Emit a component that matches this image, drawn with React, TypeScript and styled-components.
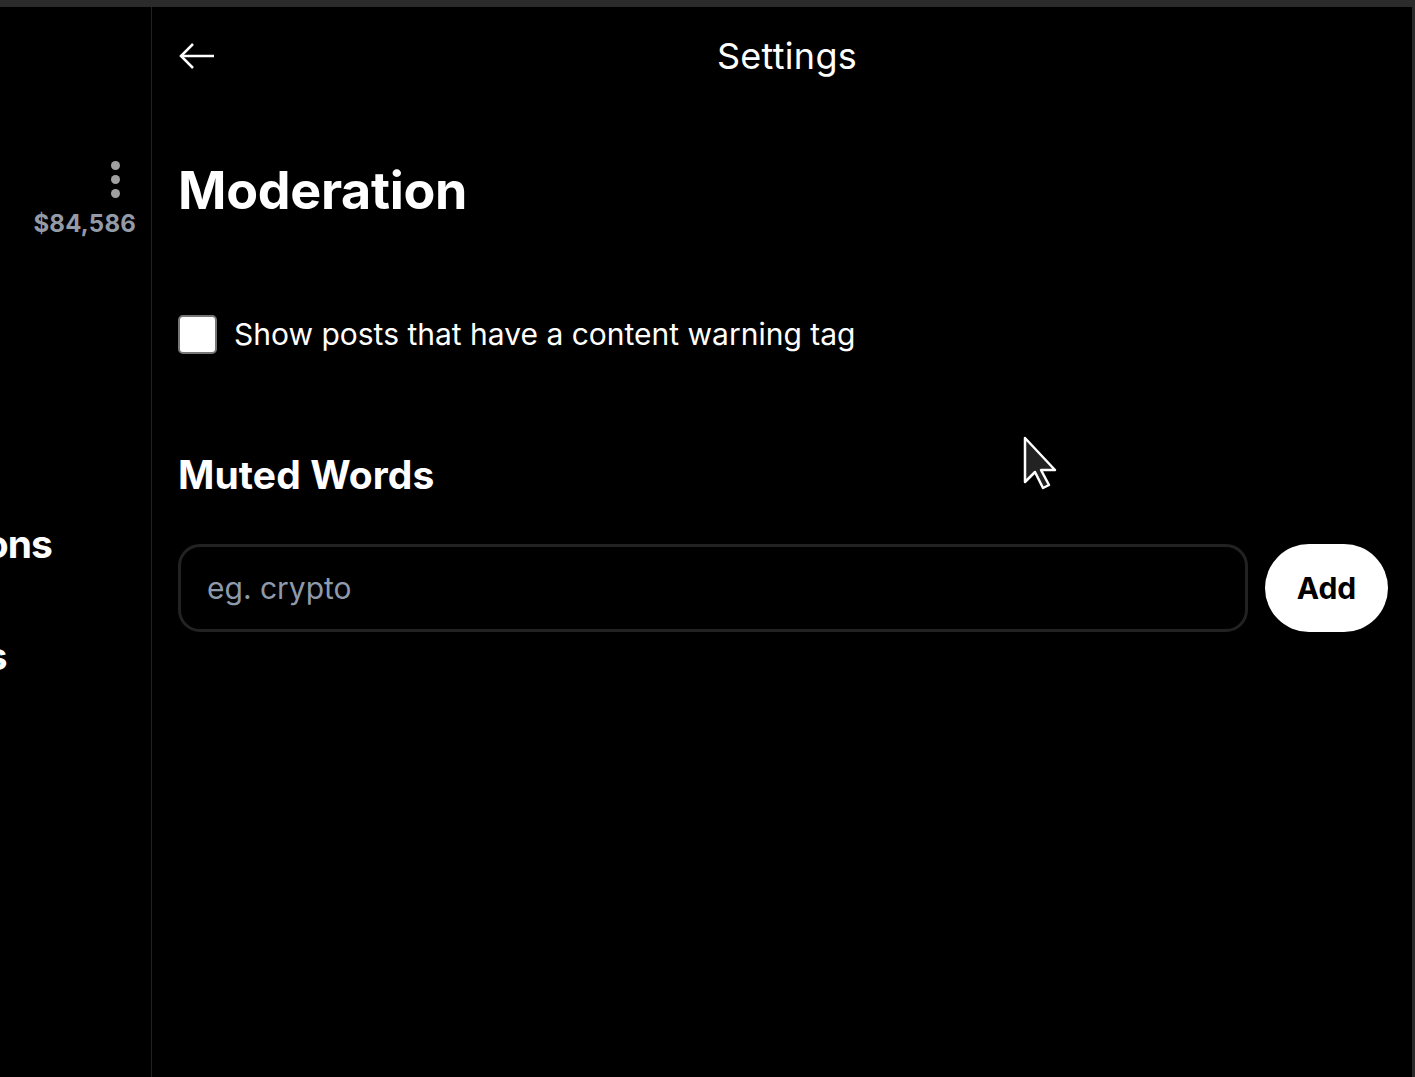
import styled, { createGlobalStyle } from 'styled-components';

const GlobalStyle = createGlobalStyle`
    html, body {
        margin: 0;
        padding: 0;
        background: #000;
        font-family: Inter, "Noto Sans", sans-serif;
        color: #fff;
    }
    * {
        box-sizing: border-box;
    }
`;

const Page = styled.div`
    display: flex;
    flex-direction: column;
    height: 100vh;
    overflow: hidden;
`;

const TopBar = styled.div`
    height: 7px;
    background: #2b2b2b;
    flex-shrink: 0;
`;

const Body = styled.div`
    flex: 1;
    display: flex;
    min-height: 0;
`;

const Sidebar = styled.aside`
    width: 152px;
    flex-shrink: 0;
    border-right: 1px solid #222;
    display: flex;
    flex-direction: column;
    overflow: hidden;
`;

const Account = styled.div`
    display: flex;
    flex-direction: column;
    align-items: flex-end;
    padding: 154px 16px 0 0;
    gap: 11px;
`;

const Dots = styled.div`
    display: flex;
    flex-direction: column;
    gap: 5px;
    padding-right: 15px;
`;

const Dot = styled.span`
    width: 9px;
    height: 9px;
    border-radius: 50%;
    background: #a0a0a0;
`;

const Balance = styled.div`
    font-size: 24px;
    font-weight: 700;
    color: #939ba6;
    letter-spacing: 0.2px;
    margin-right: -1px;
`;

const Nav = styled.nav`
    display: flex;
    flex-direction: column;
    gap: 70px;
    margin-top: 285px;
    margin-left: -181px;
`;

const NavLabel = styled.div`
    font-size: 39px;
    font-weight: 700;
    line-height: 42px;
    letter-spacing: -1px;
    white-space: nowrap;
`;

const Main = styled.main`
    flex: 1;
    border-right: 3px solid #2a2a2a;
    display: flex;
    flex-direction: column;
`;

const Header = styled.header`
    height: 97px;
    display: grid;
    grid-template-columns: 1fr auto 1fr;
    align-items: center;
    padding: 0 16px 0 26px;
`;

const BackButton = styled.button`
    background: none;
    border: none;
    padding: 0;
    width: 40px;
    height: 40px;
    display: flex;
    align-items: center;
    color: #fff;
    cursor: pointer;
`;

const HeaderTitle = styled.h1`
    margin: 0;
    font-size: 36px;
    font-weight: 400;
    letter-spacing: 0.3px;
`;

const Content = styled.section`
    padding: 0 24px 0 26px;
    display: flex;
    flex-direction: column;
`;

const PageTitle = styled.h2`
    margin: 56px 0 0;
    font-size: 52px;
    font-weight: 700;
    line-height: 62px;
    letter-spacing: -0.3px;
`;

const CheckRow = styled.label`
    display: flex;
    align-items: center;
    gap: 17px;
    margin-top: 92px;
    font-size: 30px;
    line-height: 40px;
`;

const Checkbox = styled.span`
    width: 39px;
    height: 39px;
    border-radius: 5px;
    background: #fff;
    border: 2px solid #767676;
    flex-shrink: 0;
`;

const SectionTitle = styled.h3`
    margin: 99px 0 0;
    font-size: 39px;
    font-weight: 700;
    line-height: 44px;
    letter-spacing: 0.1px;
`;

const WordForm = styled.form`
    display: flex;
    gap: 17px;
    margin-top: 47px;
`;

const WordInput = styled.input`
    flex: 1;
    height: 88px;
    background: #000;
    border: 3px solid #222;
    border-radius: 22px;
    padding: 0 26px;
    font-family: inherit;
    font-size: 30px;
    color: #fff;
    outline: none;

    &::placeholder {
        color: #8e9aab;
    }
`;

const AddButton = styled.button`
    height: 88px;
    width: 123px;
    border: none;
    border-radius: 44px;
    background: #fff;
    color: #000;
    font-family: inherit;
    font-size: 30px;
    font-weight: 700;
    cursor: pointer;
`;

const Pointer = styled.svg`
    position: absolute;
    left: 1023px;
    top: 436px;
    pointer-events: none;
`;

export default function App() {
    return (
        <Page>
            <GlobalStyle />
            <TopBar />
            <Body>
                <Sidebar>
                    <Account>
                        <Dots>
                            <Dot />
                            <Dot />
                            <Dot />
                        </Dots>
                        <Balance>$84,586</Balance>
                    </Account>
                    <Nav>
                        <NavLabel>Notifications</NavLabel>
                        <NavLabel>Messages</NavLabel>
                    </Nav>
                </Sidebar>
                <Main>
                    <Header>
                        <BackButton aria-label="Back">
                            <svg width="38" height="30" viewBox="0 0 38 30" fill="none" stroke="currentColor" strokeWidth="2.5">
                                <path d="M36 15H3" />
                                <path d="M15 3L3 15l12 12" />
                            </svg>
                        </BackButton>
                        <HeaderTitle>Settings</HeaderTitle>
                        <div />
                    </Header>
                    <Content>
                        <PageTitle>Moderation</PageTitle>
                        <CheckRow>
                            <Checkbox />
                            Show posts that have a content warning tag
                        </CheckRow>
                        <SectionTitle>Muted Words</SectionTitle>
                        <WordForm onSubmit={e => e.preventDefault()}>
                            <WordInput placeholder="eg. crypto" />
                            <AddButton type="submit">Add</AddButton>
                        </WordForm>
                    </Content>
                </Main>
            </Body>
            <Pointer width="36" height="54" viewBox="0 0 36 54">
                <path d="M2 2v44l10-10 8 16 6-3-8-15h14z" fill="#222" stroke="#fff" strokeWidth="2.5" strokeLinejoin="round" />
            </Pointer>
        </Page>
    );
}
